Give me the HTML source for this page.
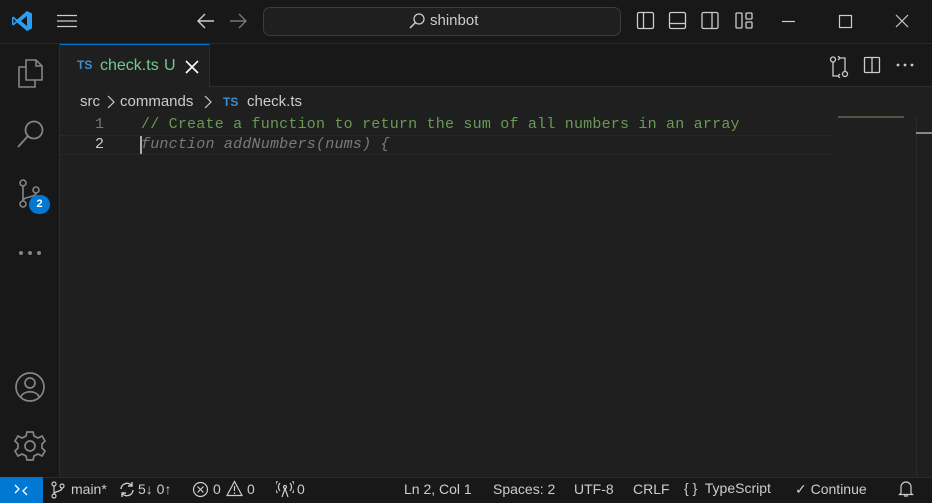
<!DOCTYPE html>
<html><head><meta charset="utf-8"><style>
*{margin:0;padding:0;box-sizing:border-box}
body{width:932px;height:503px;background:#1f1f1f;font-family:"Liberation Sans",sans-serif;color:#ccc;position:relative;overflow:hidden}
.abs{position:absolute}
svg{position:absolute}
.title{left:0;top:0;width:932px;height:44px;background:#181818;border-bottom:1px solid #2b2b2b}
.act{left:0;top:44px;width:60px;height:433px;background:#181818;border-right:1px solid #2b2b2b}
.tabs{left:60px;top:44px;width:872px;height:43px;background:#181818;border-bottom:1px solid #2b2b2b}
.tab{left:60px;top:44px;width:150px;height:44px;background:#1f1f1f;border-top:1px solid #0078d4;border-right:1px solid #2b2b2b}
.status{left:0;top:477px;width:932px;height:26px;background:#181818;border-top:1px solid #2b2b2b;font-size:14px;color:#ccc}
.mono{font-family:"Liberation Mono",monospace;font-size:15px;white-space:pre;letter-spacing:0.21px}
</style></head><body>
<div class="abs title"></div>
<svg style="left:11px;top:10px" width="22" height="22" viewBox="0 0 22 22"><path d="M16 1 L21 3.5 V18.5 L16 21 L6 12.5 L2.5 15.5 L1 14.5 V7.5 L2.5 6.5 L6 9.5 Z M16 6 L10 11 L16 16 Z M2.5 8.5 V13.5 L5 11 Z" fill="#2a9df4"/></svg>
<svg style="left:57px;top:14px" width="20" height="14"><path d="M0 1.5H20M0 7H20M0 12.5H20" stroke="#ccc" stroke-width="1.3"/></svg>
<svg style="left:196px;top:12px" width="20" height="18"><path d="M18 9H2M9 2L2 9L9 16" stroke="#ccc" stroke-width="1.4" fill="none"/></svg>
<svg style="left:228px;top:12px" width="20" height="18"><path d="M2 9H18M11 2L18 9L11 16" stroke="#777" stroke-width="1.4" fill="none"/></svg>
<div class="abs" style="left:263px;top:7px;width:358px;height:29px;border:1px solid #3c3c3c;border-radius:7px;background:#1f1f1f"></div>
<svg style="left:408px;top:12px" width="18" height="18"><circle cx="11" cy="7" r="5" stroke="#ccc" stroke-width="1.3" fill="none"/><path d="M7.5 10.5L2 16" stroke="#ccc" stroke-width="1.5"/></svg>
<div class="abs" style="left:430px;top:12px;font-size:15px;color:#ccc">shinbot</div>
<svg style="left:636px;top:11px" width="140" height="20" fill="none" stroke="#ccc" stroke-width="1.3">
<rect x="1.5" y="1.5" width="16" height="16" rx="1.5"/><path d="M7.5 1.5V17.5"/>
<rect x="33.5" y="1.5" width="16" height="16" rx="1.5"/><path d="M33.5 12.5H49.5"/>
<rect x="66" y="1.5" width="16" height="16" rx="1.5"/><path d="M76 1.5V17.5"/>
<rect x="100" y="2" width="6" height="15" rx="1"/><rect x="110" y="2" width="6" height="6" rx="1"/><rect x="110" y="11" width="6" height="6" rx="1"/>
</svg>
<svg style="left:782px;top:14px" width="140" height="16" fill="none" stroke="#ccc" stroke-width="1.2"><path d="M0 7.5H13"/><rect x="57.5" y="1.5" width="12" height="12"/><path d="M114 1L126 13M126 1L114 13"/></svg>

<div class="abs act"></div>
<svg style="left:16px;top:58px" width="28" height="30" fill="none" stroke="#858585" stroke-width="1.6"><path d="M10 2H20L26 8V22H10Z M20 2V8H26"/><path d="M10 9H3V29H19V22"/></svg>
<svg style="left:16px;top:118px" width="30" height="32" fill="none" stroke="#858585" stroke-width="1.8"><circle cx="18" cy="12" r="8.5"/><path d="M12 18L2 29"/></svg>
<svg style="left:18px;top:178px" width="26" height="32" fill="none" stroke="#858585" stroke-width="1.6"><circle cx="5" cy="5" r="3"/><circle cx="5" cy="26" r="3"/><circle cx="18" cy="12" r="3"/><path d="M5 8V23M18 15C18 20 5 18 5 23"/></svg>
<div class="abs" style="left:29px;top:195px;width:21px;height:19px;border-radius:10px;background:#0078d4;color:#fff;font-size:11px;font-weight:bold;text-align:center;line-height:19px">2</div>
<svg style="left:18px;top:250px" width="26" height="6" fill="#858585"><circle cx="3" cy="3" r="2"/><circle cx="12" cy="3" r="2"/><circle cx="21" cy="3" r="2"/></svg>
<svg style="left:14px;top:371px" width="32" height="32" fill="none" stroke="#858585" stroke-width="1.7"><circle cx="16" cy="16" r="14"/><circle cx="16" cy="12" r="5"/><path d="M7 26C9 19 23 19 25 26"/></svg>
<svg style="left:14px;top:430px" width="32" height="32" viewBox="0 0 32 32" fill="none" stroke="#858585" stroke-width="1.7"><path d="M13 2H19L20 6L24 8L28 6L31 11L28 14V18L31 21L28 26L24 24L20 26L19 30H13L12 26L8 24L4 26L1 21L4 18V14L1 11L4 6L8 8L12 6Z"/><circle cx="16" cy="16" r="5"/></svg>

<div class="abs tabs"></div>
<div class="abs tab"></div>
<div class="abs" style="left:77px;top:58px;font-size:12px;font-weight:bold;color:#3b8fd1">TS</div>
<div class="abs" style="left:100px;top:57px;font-size:16px;color:#73c991">check.ts</div>
<div class="abs" style="left:164px;top:57px;font-size:16px;color:#73c991">U</div>
<svg style="left:185px;top:60px" width="14" height="14"><path d="M1 1L13 13M13 1L1 13" stroke="#fff" stroke-width="1.6"/></svg>
<svg style="left:829px;top:56px" width="20" height="22" fill="none" stroke="#ccc" stroke-width="1.3"><circle cx="4" cy="3.5" r="2.5"/><circle cx="16" cy="18" r="2.5"/><path d="M4 6V20H9M16 15.5V2H11M9 0L11 2L9 4M11 18L9 20L11 22"/></svg>
<svg style="left:863px;top:56px" width="18" height="18" fill="none" stroke="#ccc" stroke-width="1.3"><rect x="1.5" y="1.5" width="15" height="15" rx="1"/><path d="M9 1.5V16.5"/></svg>
<svg style="left:896px;top:63px" width="18" height="4" fill="#ccc"><circle cx="2" cy="2" r="1.4"/><circle cx="9" cy="2" r="1.4"/><circle cx="16" cy="2" r="1.4"/></svg>

<div class="abs" style="left:80px;top:93px;font-size:15px;color:#ccc">src</div>
<svg style="left:106px;top:94px" width="10" height="16"><path d="M2 2L8 8L2 14" stroke="#ccc" stroke-width="1.2" fill="none"/></svg>
<div class="abs" style="left:120px;top:93px;font-size:15px;color:#ccc">commands</div>
<svg style="left:203px;top:94px" width="10" height="16"><path d="M2 2L8 8L2 14" stroke="#ccc" stroke-width="1.2" fill="none"/></svg>
<div class="abs" style="left:223px;top:95px;font-size:12px;font-weight:bold;color:#3b8fd1">TS</div>
<div class="abs" style="left:247px;top:93px;font-size:15px;color:#ccc">check.ts</div>

<div class="abs" style="left:60px;top:135px;width:770px;height:20px;border-top:1px solid #282828;border-bottom:1px solid #282828"></div>
<div class="abs mono" style="left:95px;top:115px;color:#6e7681;line-height:20px">1</div>
<div class="abs mono" style="left:95px;top:135px;color:#ccc;line-height:20px">2</div>
<div class="abs mono" style="left:141px;top:115px;color:#6a9955;line-height:20px">// Create a function to return the sum of all numbers in an array</div>
<div class="abs mono" style="left:141px;top:135px;color:#7a7a7a;font-style:italic;line-height:20px">function addNumbers(nums) {</div>
<div class="abs" style="left:140px;top:136px;width:2px;height:18px;background:#aeafad"></div>
<div class="abs" style="left:838px;top:116px;width:66px;height:2px;background:#4a5a40"></div>
<div class="abs" style="left:916px;top:116px;width:1px;height:361px;background:#2b2b2b"></div>
<div class="abs" style="left:916px;top:132px;width:16px;height:2px;background:#888"></div>

<div class="abs status"></div>
<div class="abs" style="left:0;top:477px;width:43px;height:26px;background:#0078d4"></div>
<svg style="left:13px;top:482px" width="16" height="16" fill="none" stroke="#fff" stroke-width="1.3"><path d="M2 11L6 7L2 3M14 5L10 9L14 13"/></svg>
<svg style="left:50px;top:481px" width="16" height="18" fill="none" stroke="#ccc" stroke-width="1.2"><circle cx="4" cy="3" r="2"/><circle cx="4" cy="15" r="2"/><circle cx="12" cy="5" r="2"/><path d="M4 5V13M12 7C12 11 4 10 4 13"/></svg>
<div class="abs" style="left:71px;top:481px;font-size:14px;white-space:pre">main*</div>
<svg style="left:118px;top:481px" width="18" height="17" fill="none" stroke="#ccc" stroke-width="1.4"><path d="M3 8A6 6 0 0 1 14 5M15 9A6 6 0 0 1 4 12M14 1V5H10M4 16V12H8"/></svg>
<div class="abs" style="left:138px;top:481px;font-size:14px;white-space:pre">5↓ 0↑</div>
<svg style="left:192px;top:481px" width="17" height="17" fill="none" stroke="#ccc" stroke-width="1.2"><circle cx="8.5" cy="8.5" r="7"/><path d="M5.5 5.5L11.5 11.5M11.5 5.5L5.5 11.5"/></svg>
<div class="abs" style="left:213px;top:481px;font-size:14px">0</div>
<svg style="left:226px;top:480px" width="17" height="17" fill="none" stroke="#ccc" stroke-width="1.2"><path d="M8.5 1.5L16 15.5H1Z M8.5 6V11M8.5 12.5V14"/></svg>
<div class="abs" style="left:247px;top:481px;font-size:14px">0</div>
<svg style="left:276px;top:481px" width="18" height="17" fill="none" stroke="#ccc" stroke-width="1.2"><circle cx="9" cy="6" r="1.5"/><path d="M9 7.5L6 16M9 7.5L12 16M4 2A6 6 0 0 0 4 10M14 2A6 6 0 0 1 14 10M1.5 0A9 9 0 0 0 1.5 12M16.5 0A9 9 0 0 1 16.5 12"/></svg>
<div class="abs" style="left:297px;top:481px;font-size:14px">0</div>
<div class="abs" style="left:404px;top:481px;font-size:14px;white-space:pre">Ln 2, Col 1</div>
<div class="abs" style="left:493px;top:481px;font-size:14px;white-space:pre">Spaces: 2</div>
<div class="abs" style="left:574px;top:481px;font-size:14px">UTF-8</div>
<div class="abs" style="left:633px;top:481px;font-size:14px">CRLF</div>
<div class="abs" style="left:684px;top:480px;font-size:14px;white-space:pre">{ }  TypeScript</div>
<div class="abs" style="left:795px;top:481px;font-size:14px;white-space:pre">✓ Continue</div>
<svg style="left:898px;top:480px" width="16" height="18" fill="none" stroke="#ccc" stroke-width="1.2"><path d="M3 13V7A5 5 0 0 1 13 7V13L14.5 14.5H1.5Z M6 16H10"/></svg>
</body></html>
